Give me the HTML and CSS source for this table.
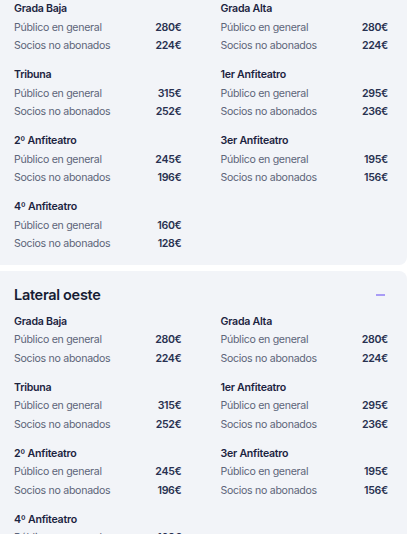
FILE: index.html
```html
<!DOCTYPE html>
<html lang="es">
<head>
<meta charset="utf-8">
<link rel="stylesheet" href="styles.css">
</head>
<body>
<div class="page">
  <section class="card card--scrolled">
    <div class="grid">
      <div class="zone"><h3>Grada Baja</h3><div class="row"><span>Público en general</span><b>280€</b></div><div class="row"><span>Socios no abonados</span><b>224€</b></div></div>
      <div class="zone"><h3>Grada Alta</h3><div class="row"><span>Público en general</span><b>280€</b></div><div class="row"><span>Socios no abonados</span><b>224€</b></div></div>
      <div class="zone"><h3>Tribuna</h3><div class="row"><span>Público en general</span><b>315€</b></div><div class="row"><span>Socios no abonados</span><b>252€</b></div></div>
      <div class="zone"><h3>1er Anfiteatro</h3><div class="row"><span>Público en general</span><b>295€</b></div><div class="row"><span>Socios no abonados</span><b>236€</b></div></div>
      <div class="zone"><h3>2º Anfiteatro</h3><div class="row"><span>Público en general</span><b>245€</b></div><div class="row"><span>Socios no abonados</span><b>196€</b></div></div>
      <div class="zone"><h3>3er Anfiteatro</h3><div class="row"><span>Público en general</span><b>195€</b></div><div class="row"><span>Socios no abonados</span><b>156€</b></div></div>
      <div class="zone"><h3>4º Anfiteatro</h3><div class="row"><span>Público en general</span><b>160€</b></div><div class="row"><span>Socios no abonados</span><b>128€</b></div></div>
    </div>
  </section>
  <section class="card">
    <div class="head"><h2>Lateral oeste</h2><span class="minus"></span></div>
    <div class="grid">
      <div class="zone"><h3>Grada Baja</h3><div class="row"><span>Público en general</span><b>280€</b></div><div class="row"><span>Socios no abonados</span><b>224€</b></div></div>
      <div class="zone"><h3>Grada Alta</h3><div class="row"><span>Público en general</span><b>280€</b></div><div class="row"><span>Socios no abonados</span><b>224€</b></div></div>
      <div class="zone"><h3>Tribuna</h3><div class="row"><span>Público en general</span><b>315€</b></div><div class="row"><span>Socios no abonados</span><b>252€</b></div></div>
      <div class="zone"><h3>1er Anfiteatro</h3><div class="row"><span>Público en general</span><b>295€</b></div><div class="row"><span>Socios no abonados</span><b>236€</b></div></div>
      <div class="zone"><h3>2º Anfiteatro</h3><div class="row"><span>Público en general</span><b>245€</b></div><div class="row"><span>Socios no abonados</span><b>196€</b></div></div>
      <div class="zone"><h3>3er Anfiteatro</h3><div class="row"><span>Público en general</span><b>195€</b></div><div class="row"><span>Socios no abonados</span><b>156€</b></div></div>
      <div class="zone"><h3>4º Anfiteatro</h3><div class="row"><span>Público en general</span><b>160€</b></div><div class="row"><span>Socios no abonados</span><b>128€</b></div></div>
    </div>
  </section>
</div>
</body>
</html>
```

FILE: styles.css
```css
* { box-sizing: border-box; }
html, body { margin: 0; padding: 0; background: #ffffff; }
body {
  font-family: Inter, "Noto Sans", sans-serif;
  color: #1b2340;
  overflow: hidden;
}
.page {
  display: flex;
  flex-direction: column;
  gap: 6px;
  width: 415px;
  margin-left: -8px;
}
.card {
  background: #f2f4f8;
  border-radius: 8px;
  width: 415px;
  padding: 14px 19px 11px 22px;
}
.card--scrolled {
  margin-top: -14px;
}
.head {
  display: flex;
  align-items: center;
  justify-content: space-between;
  height: 20px;
  margin-bottom: 8px;
}
.head h2 {
  margin: 0;
  font-size: 14.5px;
  font-weight: 600;
  color: #161c33;
  letter-spacing: -0.3px;
}
.minus {
  width: 9px;
  height: 2px;
  background: #a99cf6;
  margin-right: 3px;
}
.grid {
  display: grid;
  grid-template-columns: 1fr 1fr;
  column-gap: 39px;
  row-gap: 10.5px;
}
.zone h3 {
  margin: 0;
  font-size: 10.6px;
  font-weight: 600;
  line-height: 18.5px;
  letter-spacing: -0.25px;
  color: #1b2340;
}
.row {
  display: flex;
  justify-content: space-between;
  align-items: center;
  font-size: 10.6px;
  line-height: 18.5px;
  letter-spacing: -0.3px;
}
.row span { color: #5d6579; }
.row b { font-weight: 600; color: #283150; }
```
